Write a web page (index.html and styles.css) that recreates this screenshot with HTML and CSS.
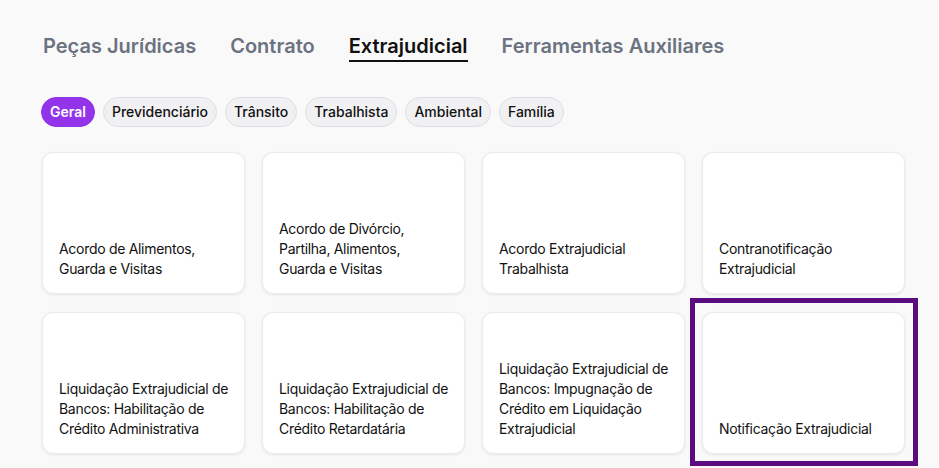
FILE: index.html
```html
<!DOCTYPE html>
<html lang="pt-BR">
<head>
<meta charset="utf-8">
<title>Extrajudicial</title>
<link rel="stylesheet" href="styles.css">
</head>
<body>
<main class="page">
  <nav class="tabs">
    <span class="tab">Peças Jurídicas</span>
    <span class="tab">Contrato</span>
    <span class="tab active">Extrajudicial</span>
    <span class="tab">Ferramentas Auxiliares</span>
  </nav>
  <div class="chips">
    <span class="chip selected">Geral</span>
    <span class="chip">Previdenciário</span>
    <span class="chip">Trânsito</span>
    <span class="chip">Trabalhista</span>
    <span class="chip">Ambiental</span>
    <span class="chip">Família</span>
  </div>
  <section class="grid">
    <div class="card"><p>Acordo de Alimentos, Guarda e Visitas</p></div>
    <div class="card"><p>Acordo de Divórcio, Partilha, Alimentos, Guarda e Visitas</p></div>
    <div class="card"><p>Acordo Extrajudicial Trabalhista</p></div>
    <div class="card"><p>Contranotificação Extrajudicial</p></div>
    <div class="card"><p>Liquidação Extrajudicial de Bancos: Habilitação de Crédito Administrativa</p></div>
    <div class="card"><p>Liquidação Extrajudicial de Bancos: Habilitação de Crédito Retardatária</p></div>
    <div class="card"><p>Liquidação Extrajudicial de Bancos: Impugnação de Crédito em Liquidação Extrajudicial</p></div>
    <div class="card"><p>Notificação Extrajudicial</p></div>
  </section>
  <div class="highlight"></div>
</main>
</body>
</html>
```

FILE: styles.css
```css
html, body {
  margin: 0;
  padding: 0;
  background: #f9f9f9;
  font-family: Inter, "Noto Sans", sans-serif;
  color: #111;
}
.page {
  position: relative;
  width: 939px;
  height: 468px;
  overflow: hidden;
  padding: 34px 0 0 43px;
  box-sizing: border-box;
}
.tabs {
  display: flex;
  gap: 34px;
}
.tab {
  font-size: 20px;
  line-height: 24px;
  font-weight: 600;
  color: #6b7280;
  padding-bottom: 2px;
  border-bottom: 2px solid transparent;
}
.tab.active {
  color: #111;
  border-bottom-color: #111;
}
.chips {
  display: flex;
  gap: 8px;
  margin-top: 35px;
  margin-left: -2px;
}
.chip {
  font-size: 14px;
  font-weight: 500;
  line-height: 28px;
  padding: 0 8px;
  border-radius: 16px;
  background: #f1f1f3;
  border: 1px solid #dedfe2;
  color: #111;
}
.chip.selected {
  background: #9333ea;
  border-color: #9333ea;
  color: #fff;
  font-weight: 600;
}
.grid {
  display: grid;
  grid-template-columns: repeat(4, 203px);
  grid-auto-rows: 142px;
  column-gap: 17px;
  row-gap: 18px;
  margin-top: 25px;
  margin-left: -1px;
}
.card {
  background: #fff;
  border: 1px solid #ebebed;
  border-radius: 11px;
  box-shadow: 0 1px 3px rgba(0, 0, 0, 0.08);
  display: flex;
  flex-direction: column;
  justify-content: flex-end;
  padding: 0 14px 14px 16px;
}
.card p {
  margin: 0;
  font-size: 14px;
  line-height: 20px;
  letter-spacing: -0.3px;
  color: #111;
}
.highlight {
  position: absolute;
  left: 690px;
  top: 298px;
  width: 228px;
  height: 168px;
  box-sizing: border-box;
  border: 5px solid #5b0c80;
}
```
